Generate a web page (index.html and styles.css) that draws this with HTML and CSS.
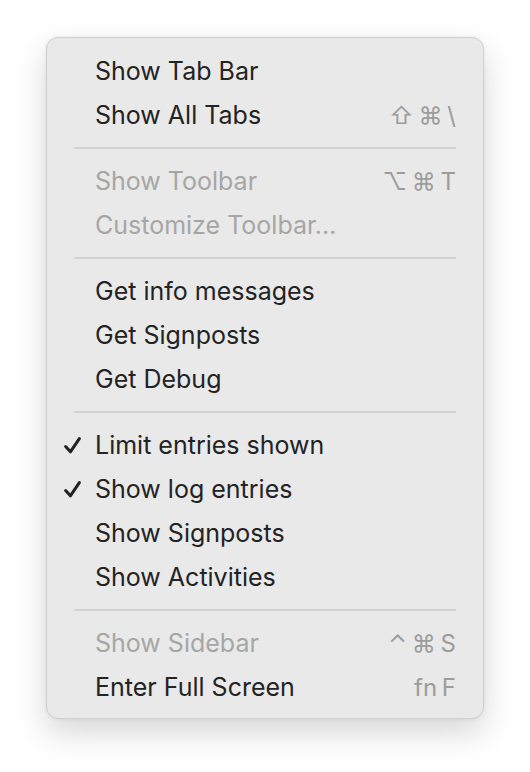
FILE: index.html
```html
<!DOCTYPE html>
<html>
<head>
<meta charset="utf-8">
<link rel="stylesheet" href="styles.css">
</head>
<body>
<div class="menu">
  <div class="item"><span class="check"></span><span class="label">Show Tab Bar</span></div>
  <div class="item"><span class="check"></span><span class="label">Show All Tabs</span><span class="keys">⇧ ⌘ \</span></div>
  <div class="sep"></div>
  <div class="item disabled"><span class="check"></span><span class="label">Show Toolbar</span><span class="keys">⌥ ⌘ T</span></div>
  <div class="item disabled"><span class="check"></span><span class="label">Customize Toolbar…</span></div>
  <div class="sep"></div>
  <div class="item"><span class="check"></span><span class="label">Get info messages</span></div>
  <div class="item"><span class="check"></span><span class="label">Get Signposts</span></div>
  <div class="item"><span class="check"></span><span class="label">Get Debug</span></div>
  <div class="sep"></div>
  <div class="item"><span class="check"><svg viewBox="0 0 18 18" width="19" height="19"><path d="M2.5 10 L7 15 L15.5 2.5" fill="none" stroke="#232323" stroke-width="2.9" stroke-linecap="round" stroke-linejoin="round"/></svg></span><span class="label">Limit entries shown</span></div>
  <div class="item"><span class="check"><svg viewBox="0 0 18 18" width="19" height="19"><path d="M2.5 10 L7 15 L15.5 2.5" fill="none" stroke="#232323" stroke-width="2.9" stroke-linecap="round" stroke-linejoin="round"/></svg></span><span class="label">Show log entries</span></div>
  <div class="item"><span class="check"></span><span class="label">Show Signposts</span></div>
  <div class="item"><span class="check"></span><span class="label">Show Activities</span></div>
  <div class="sep"></div>
  <div class="item disabled"><span class="check"></span><span class="label">Show Sidebar</span><span class="keys">⌃ ⌘ S</span></div>
  <div class="item"><span class="check"></span><span class="label">Enter Full Screen</span><span class="keys">fn F</span></div>
</div>
</body>
</html>
```
FILE: styles.css
```css
html, body {
  margin: 0;
  padding: 0;
  background: #ffffff;
}
body {
  box-sizing: border-box;
  min-height: 772px;
  padding: 37px 0 60px 46px;
  font-family: Inter, "Noto Sans", "Liberation Sans", sans-serif;
}
.menu {
  box-sizing: border-box;
  width: 438px;
  padding: 11px 0 9px 0;
  background: #e9e9e9;
  border: 1px solid #cfcfcf;
  border-radius: 12px;
  box-shadow: 0 14px 32px rgba(0, 0, 0, 0.16), 0 0 4px rgba(0, 0, 0, 0.06);
  display: flex;
  flex-direction: column;
}
.item {
  height: 44px;
  display: flex;
  align-items: center;
  padding: 0 27px 0 16px;
  font-size: 25px;
  color: #232323;
}
.check {
  width: 32px;
  flex: none;
  display: flex;
  align-items: center;
}
.label {
  flex: 1;
}
.keys {
  color: #9c9c9c;
  font-size: 24px;
  word-spacing: -2px;
}
.disabled {
  color: #a6a6a6;
}
.sep {
  height: 2px;
  margin: 10px 27px;
  background: #d3d3d3;
}
```
